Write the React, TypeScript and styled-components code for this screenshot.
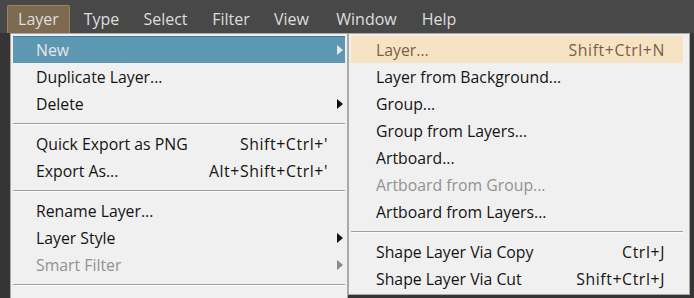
import styled, { createGlobalStyle } from "styled-components";

const Global = createGlobalStyle`
    html, body {
        margin:0;
        padding:0;
        background:#353535;
        overflow:hidden;
    }
    body{
        font-family:"Open Sans", "Noto Sans", sans-serif;
    }
`

const Screen = styled.div`
    width:694px;
    height:298px;
    background:#353535;
    display:flex;
    flex-direction:column;
    overflow:hidden;
`

const MenuBar = styled.div`
    height:33px;
    background:#484848;
    display:flex;
    align-items:flex-start;
    padding:5px 0 0 7px;
    box-sizing:border-box;
    flex-shrink:0;
`

const BarItem = styled.div<{ $active?: boolean; $w: number }>`
    width:${p => p.$w}px;
    height:28px;
    box-sizing:border-box;
    display:flex;
    align-items:center;
    justify-content:center;
    color:#dedede;
    font-size:16px;
    padding-bottom:2px;
    border:1px solid ${p => p.$active ? "#9c8462" : "transparent"};
    border-bottom:none;
    border-radius:2px 2px 0 0;
    background:${p => p.$active ? "#7e6a50" : "transparent"};
`

const Body = styled.div`
    display:flex;
    align-items:flex-start;
    padding-left:10px;
`

const Panel = styled.div<{ $w: number; $pr: number }>`
    width:${p => p.$w}px;
    box-sizing:border-box;
    background:#f0f0f0;
    border:1px solid #a9a9a9;
    padding:2px ${p => p.$pr}px 2px 2px;
    display:flex;
    flex-direction:column;
    flex-shrink:0;
`

const Row = styled.div<{ $state?: "blue" | "peach"; $disabled?: boolean; $pl: number; $pr: number }>`
    height:27px;
    display:flex;
    align-items:center;
    justify-content:space-between;
    padding:0 ${p => p.$pr}px 0 ${p => p.$pl}px;
    font-size:15.8px;
    box-sizing:border-box;
    color:${p => p.$disabled ? "#929292" : p.$state === "blue" ? "#e4e8ea" : p.$state === "peach" ? "#7d5e44" : "#141414"};
    background:${p => p.$state === "blue" ? "#5e97b1" : p.$state === "peach" ? "#f6e3c4" : "transparent"};
    border-top:1px solid ${p => p.$state === "blue" ? "#3d7fa6" : p.$state === "peach" ? "#f6e3c4" : "transparent"};
    white-space:nowrap;
`

const Shortcut = styled.span`
    letter-spacing:0.6px;
`

const Arrow = styled.span<{ $color: string }>`
    width:0;
    height:0;
    border-top:5px solid transparent;
    border-bottom:5px solid transparent;
    border-left:6px solid ${p => p.$color};
    margin-right:-3px;
`

const Separator = styled.div`
    height:13px;
    display:flex;
    align-items:center;
    &::after{
        content:"";
        flex:1;
        height:1px;
        background:#a0a0a0;
        border-bottom:1px solid #fbfbfb;
    }
`

type Item = { label?: string; key?: string; sub?: boolean; state?: "blue" | "peach"; disabled?: boolean; sep?: boolean };

const mainItems: Item[] = [
    { label: "New", sub: true, state: "blue" },
    { label: "Duplicate Layer..." },
    { label: "Delete", sub: true },
    { sep: true },
    { label: "Quick Export as PNG", key: "Shift+Ctrl+'" },
    { label: "Export As...", key: "Alt+Shift+Ctrl+'" },
    { sep: true },
    { label: "Rename Layer..." },
    { label: "Layer Style", sub: true },
    { label: "Smart Filter", sub: true, disabled: true },
    { sep: true },
    { label: "", sub: true },
];

const subItems: Item[] = [
    { label: "Layer...", key: "Shift+Ctrl+N", state: "peach" },
    { label: "Layer from Background..." },
    { label: "Group..." },
    { label: "Group from Layers..." },
    { label: "Artboard..." },
    { label: "Artboard from Group...", disabled: true },
    { label: "Artboard from Layers..." },
    { sep: true },
    { label: "Shape Layer Via Copy", key: "Ctrl+J" },
    { label: "Shape Layer Via Cut", key: "Shift+Ctrl+J" },
];

const bar = [
    { t: "Layer", w: 63, active: true },
    { t: "Type", w: 63 },
    { t: "Select", w: 65 },
    { t: "Filter", w: 66 },
    { t: "View", w: 55 },
    { t: "Window", w: 95 },
    { t: "Help", w: 50 },
];

const Menu = ({ items, w, pl, pr, keyPr, panelPr }: { items: Item[]; w: number; pl: number; pr: number; keyPr: number; panelPr: number }) => (
    <Panel $w={w} $pr={panelPr}>
        {items.map((it, i) => it.sep ? <Separator key={i} /> : (
            <Row key={i} $state={it.state} $disabled={it.disabled} $pl={pl} $pr={it.key ? keyPr : pr}>
                <span>{it.label}</span>
                {it.key && <Shortcut>{it.key}</Shortcut>}
                {it.sub && <Arrow $color={it.disabled ? "#8a8a8a" : it.state === "blue" ? "#e8e8e8" : "#111"} />}
            </Row>
        ))}
    </Panel>
)

export default function App() {
    return (
        <Screen>
            <Global />
            <MenuBar>
                {bar.map(b => <BarItem key={b.t} $w={b.w} $active={b.active}>{b.t}</BarItem>)}
            </MenuBar>
            <Body>
                <Menu items={mainItems} w={338} pl={23} pr={5} keyPr={17} panelPr={2} />
                <Menu items={subItems} w={342} pl={25} pr={17} keyPr={18} panelPr={6} />
            </Body>
        </Screen>
    )
}
